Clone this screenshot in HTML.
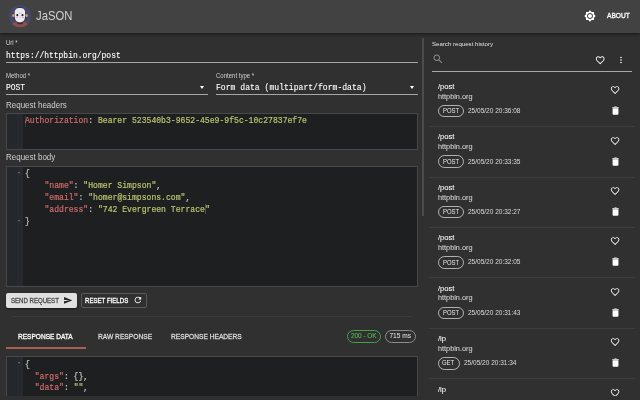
<!DOCTYPE html>
<html><head><meta charset="utf-8">
<style>
html,body{will-change:transform;margin:0;padding:0;width:640px;height:400px;overflow:hidden;background:#303030;font-family:"Liberation Sans",sans-serif;}
.a{position:absolute;}
.t{position:absolute;white-space:nowrap;line-height:1;transform-origin:0 0;}
.m{font-family:"Liberation Mono",monospace;}
#bar{left:0;top:0;width:640px;height:33px;background:#424242;box-shadow:0 1px 3px rgba(0,0,0,0.5);}
.ul{position:absolute;height:1px;background:#a8a8a8;}
.lab{color:#d0d0d0;font-size:6.7px;transform:scaleX(0.9);}
.inp{color:#fff;font-size:8.5px;transform:scaleX(0.937);-webkit-text-stroke:0.1px #fff;}
.sec{color:#d0d0d0;font-size:8.2px;transform:scaleX(0.975);}
.ed{position:absolute;background:#1d1f21;border:1px solid #484848;box-sizing:border-box;overflow:hidden;}
.gut{position:absolute;left:0;top:0;bottom:0;width:16px;background:linear-gradient(90deg,#24272b 0,#24272b 10.3px,#26292d 10.3px,#26292d 16.3px,#1d1f21 16.3px);}
.code{position:absolute;-webkit-text-stroke:0.2px #c5c8c6;transform-origin:0 0;transform:scaleX(0.9);font-family:"Liberation Mono",monospace;font-size:9px;color:#c5c8c6;white-space:pre;line-height:12px;}
.k{color:#d26a6a;-webkit-text-stroke:0.2px #d26a6a;}
.s{color:#bcc46e;-webkit-text-stroke:0.2px #bcc46e;}
.fold{position:absolute;width:0;height:0;border-left:1.7px solid transparent;border-right:1.7px solid transparent;border-top:2.2px solid #7a7a7a;}
.btxt{font-weight:normal;-webkit-text-stroke:0.3px currentColor;}
.chip{position:absolute;box-sizing:border-box;border:1px solid rgba(255,255,255,0.62);border-radius:7px;}
.hd{position:absolute;}
.tt{color:#fff;font-size:7.6px;-webkit-text-stroke:0.06px #fff;}
.host{color:#cfcfcf;font-size:7.3px;-webkit-text-stroke:0.1px #cfcfcf;}
.date{color:rgba(255,255,255,0.8);font-size:7px;transform:scaleX(0.93);}
.cht{color:#e8e8e8;font-size:7px;transform:scaleX(0.845);}
.div{position:absolute;left:429px;width:206px;height:1px;background:#3e3e3e;}
</style></head><body>

<!-- App bar -->
<div id="bar" class="a"></div>
<svg class="a" style="left:9px;top:5px" width="22.5" height="22.5" viewBox="0 0 22.5 22.5">
  <defs><clipPath id="cc"><circle cx="11.1" cy="11.2" r="11.1"/></clipPath></defs>
  <circle cx="11.1" cy="11.2" r="11.1" fill="#454869"/>
  <g clip-path="url(#cc)">
  <path d="M1.5 23 Q2.5 16.2 11 15.6 Q19.5 16.2 20.5 23Z" fill="#8e4f46"/>
  <ellipse cx="10.9" cy="10.4" rx="6.4" ry="8.3" fill="#2c2f4e"/>
  <rect x="8.6" y="16" width="4.8" height="3.2" fill="#262942"/>
  </g>
  <ellipse cx="4.3" cy="10.6" rx="1.2" ry="1.5" fill="#e39a68"/>
  <ellipse cx="17.6" cy="10.6" rx="1.2" ry="1.5" fill="#e39a68"/>
  <path d="M5.6 7.8 C5.6 4 7.8 2.9 10.9 2.9 C14 2.9 16.2 4 16.2 7.8 L16 12.6 C15.7 16 13.7 17.4 10.9 17.4 C8.1 17.4 6.1 16 5.8 12.6 Z" fill="#ebebf0"/>
  <ellipse cx="8.3" cy="10.2" rx="1" ry="1.1" fill="#1c1f33"/>
  <ellipse cx="13.5" cy="10.2" rx="1" ry="1.1" fill="#1c1f33"/>
  <rect x="6.6" y="12" width="2" height="1" fill="#e7a3a6"/>
  <rect x="13.2" y="12" width="2" height="1" fill="#e7a3a6"/>
  <circle cx="10.9" cy="8.2" r="0.8" fill="#e7a3a6"/>
  <rect x="10.4" y="10.5" width="1" height="3" fill="#d6d6e4"/>
</svg>
<div class="t" style="left:36px;top:9.6px;font-size:12.8px;color:#d2d2d2;transform:scaleX(0.88);">JaSON</div>
<svg class="a" style="left:584px;top:10px" width="12" height="12" viewBox="0 0 24 24"><path fill="#fff" d="M20 8.69V4h-4.69L12 .69 8.69 4H4v4.69L.69 12 4 15.31V20h4.69L12 23.31 15.31 20H20v-4.69L23.31 12 20 8.69zM12 18c-3.31 0-6-2.69-6-6s2.69-6 6-6 6 2.69 6 6-2.69 6-6 6zm0-10c-2.21 0-4 1.79-4 4s1.79 4 4 4 4-1.79 4-4-1.79-4-4-4z"/></svg>
<div class="t btxt" style="left:606.5px;top:12.2px;font-size:7.7px;color:#fff;transform:scaleX(0.865);">ABOUT</div>

<!-- Left form -->
<div class="t lab" style="left:6px;top:40.4px;">Url *</div>
<div class="t m inp" style="left:6px;top:52px;">https://httpbin.org/post</div>
<div class="ul" style="left:6px;top:62px;width:412px;"></div>

<div class="t lab" style="left:6px;top:72.8px;">Method *</div>
<div class="t m inp" style="left:6px;top:84.3px;">POST</div>
<div class="ul" style="left:6px;top:94px;width:201.5px;"></div>
<div class="a" style="left:199.7px;top:86.4px;width:0;height:0;border-left:2.4px solid transparent;border-right:2.4px solid transparent;border-top:3px solid #fff;"></div>

<div class="t lab" style="left:216px;top:72.8px;">Content type *</div>
<div class="t m inp" style="left:216px;top:84.3px;transform:scaleX(0.952);">Form data (multipart/form-data)</div>
<div class="ul" style="left:216px;top:94px;width:202px;"></div>
<div class="a" style="left:409.7px;top:86.4px;width:0;height:0;border-left:2.4px solid transparent;border-right:2.4px solid transparent;border-top:3px solid #fff;"></div>

<div class="t sec" style="left:6px;top:102px;">Request headers</div>
<div class="ed" style="left:6px;top:113px;width:412px;height:37px;">
  <div class="gut"></div>
  <div class="a" style="left:17.6px;top:1.5px;width:0.6px;height:11px;background:#3c3c3c;"></div><div class="code" style="left:18.2px;top:1px;"><span class="k">Authorization</span>: <span class="s">Bearer 523540b3-9652-45e9-9f5c-10c27837ef7e</span></div>
</div>

<div class="t sec" style="left:6px;top:154.4px;">Request body</div>
<div class="ed" style="left:6px;top:166px;width:412px;height:121px;">
  <div class="gut"></div>
  <div class="fold" style="left:11px;top:4.7px;"></div>
  <div class="fold" style="left:11px;top:52.7px;"></div>
  <div class="code" style="left:18.2px;top:1px;">{
    <span class="k">"name"</span>: <span class="s">"Homer Simpson"</span>,
    <span class="k">"email"</span>: <span class="s">"homer@simpsons.com"</span>,
    <span class="k">"address"</span>: <span class="s">"742 Evergreen Terrace<span style="display:inline-block;width:0;border-left:0.6px solid #555;margin-right:-0.6px;height:10px;vertical-align:-2px;"></span>"</span>
}</div>
</div>

<!-- buttons -->
<div class="a" style="left:6px;top:293px;width:70.5px;height:15px;background:#e0e0e0;border-radius:2px;box-shadow:0 1px 2px rgba(0,0,0,0.5);"></div>
<div class="t btxt" style="left:10.8px;top:296.7px;font-size:7px;color:#4a4a4a;transform:scaleX(0.866);">SEND REQUEST</div>
<svg class="a" style="left:63.9px;top:297px" width="8.2" height="6.8" viewBox="2 3 21 18" preserveAspectRatio="none"><path fill="#222" d="M2.01 21L23 12 2.01 3 2 10l15 2-15 2z"/></svg>
<div class="a" style="left:80.5px;top:293px;width:66px;height:15px;border:1px solid #5a5a5a;box-sizing:border-box;border-radius:2px;"></div>
<div class="t btxt" style="left:85px;top:296.6px;font-size:7px;color:#fff;transform:scaleX(0.87);">RESET FIELDS</div>
<svg class="a" style="left:132.7px;top:294.9px" width="9.8" height="9.8" viewBox="0 0 24 24"><path fill="#fff" d="M17.65 6.35C16.2 4.9 14.21 4 12 4c-4.42 0-7.99 3.58-7.99 8s3.57 8 7.99 8c3.73 0 6.84-2.55 7.73-6h-2.08c-.82 2.33-3.04 4-5.65 4-3.31 0-6-2.69-6-6s2.69-6 6-6c1.66 0 3.14.69 4.22 1.78L13 11h7V4l-2.35 2.35z"/></svg>

<!-- tabs -->
<div class="a" style="left:12px;top:316px;width:400px;height:1px;background:#3c3c3c;"></div>
<div class="t btxt" style="left:17.5px;top:332.9px;font-size:7px;color:#fff;transform:scaleX(0.935);">RESPONSE DATA</div>
<div class="t btxt" style="left:98.3px;top:332.9px;font-size:7px;color:rgba(255,255,255,0.7);transform:scaleX(0.95);">RAW RESPONSE</div>
<div class="t btxt" style="left:171.3px;top:332.9px;font-size:7px;color:rgba(255,255,255,0.7);transform:scaleX(0.947);">RESPONSE HEADERS</div>
<div class="a" style="left:6px;top:346.5px;width:80px;height:2.2px;background:#a6604f;"></div>

<div class="chip" style="left:346.5px;top:330px;width:34.5px;height:12.5px;border-color:#43a047;"></div>
<div class="t" style="left:351px;top:333.3px;font-size:6.4px;color:#52b656;-webkit-text-stroke:0.12px #52b656;">200 - OK</div>
<div class="chip" style="left:385px;top:330px;width:31px;height:12.5px;border-color:#8c8c8c;"></div>
<div class="t" style="left:389.4px;top:333.3px;font-size:6.6px;color:#e6e6e6;">715 ms</div>

<div class="ed" style="left:6px;top:356px;width:411.6px;height:50px;">
  <div class="gut"></div>
  <div class="fold" style="left:11px;top:4.7px;"></div>
  <div class="code" style="left:18.2px;top:3px;line-height:11.7px;">{
  <span class="k">"args"</span>: {},
  <span class="k">"data"</span>: <span class="s">""</span>,
</div>
</div>

<div class="a" style="left:0;top:395.5px;width:425px;height:5px;background:#2f2f2f;"></div>
<!-- scrollbar -->
<div class="a" style="left:421.6px;top:38px;width:2.4px;height:178px;background:#4c4c4c;"></div>

<!-- right panel -->
<div class="t" style="left:432px;top:40.6px;font-size:6.1px;color:#e0e0e0;">Search request history</div>
<svg class="a" style="left:431.6px;top:53.4px" width="12" height="12" viewBox="0 0 24 24"><path fill="#8e8e8e" d="M15.5 14h-.79l-.28-.27C15.41 12.59 16 11.11 16 9.5 16 5.91 13.09 3 9.5 3S3 5.91 3 9.5 5.91 16 9.5 16c1.61 0 3.09-.59 4.23-1.57l.27.28v.79l5 4.99L20.49 19l-4.99-5zm-6 0C7.01 14 5 11.99 5 9.5S7.01 5 9.5 5 14 7.01 14 9.5 11.99 14 9.5 14z"/></svg>
<svg class="a" style="left:595.2px;top:54.8px" width="10.4" height="10.4" viewBox="0 0 24 24"><path fill="#fff" d="M16.5 3c-1.74 0-3.41.81-4.5 2.09C10.91 3.81 9.24 3 7.5 3 4.42 3 2 5.42 2 8.5c0 3.78 3.4 6.86 8.55 11.54L12 21.35l1.45-1.32C18.6 15.36 22 12.28 22 8.5 22 5.42 19.58 3 16.5 3zm-4.4 15.55l-.1.1-.1-.1C7.14 14.24 4 11.39 4 8.5 4 6.5 5.5 5 7.5 5c1.54 0 3.04.99 3.57 2.36h1.87C13.46 5.99 14.96 5 16.5 5c2 0 3.5 1.5 3.5 3.5 0 2.89-3.14 5.74-7.9 10.05z"/></svg>
<svg class="a" style="left:616px;top:55px" width="10" height="10" viewBox="0 0 24 24"><path fill="#fff" d="M12 8c1.1 0 2-.9 2-2s-.9-2-2-2-2 .9-2 2 .9 2 2 2zm0 2c-1.1 0-2 .9-2 2s.9 2 2 2 2-.9 2-2-.9-2-2-2zm0 6c-1.1 0-2 .9-2 2s.9 2 2 2 2-.9 2-2-.9-2-2-2z"/></svg>
<div class="ul" style="left:432px;top:71px;width:200px;"></div>

<div class="a" style="left:0;top:0;width:640px;height:396px;overflow:hidden;"><div class="t tt" style="left:438px;top:82.98px;">/post</div>
<div class="t host" style="left:438px;top:92.68px;">httpbin.org</div>
<div class="chip" style="left:438px;top:104.88px;width:26px;height:12.6px;"></div>
<div class="t cht" style="left:442.5px;top:107.28px;">POST</div>
<div class="t date" style="left:468px;top:107.18px;">25/05/20 20:36:08</div>
<svg class="a" style="left:609.9px;top:85.08px" width="10.2" height="10.2" viewBox="0 0 24 24"><path fill="#fff" d="M16.5 3c-1.74 0-3.41.81-4.5 2.09C10.91 3.81 9.24 3 7.5 3 4.42 3 2 5.42 2 8.5c0 3.78 3.4 6.86 8.55 11.54L12 21.35l1.45-1.32C18.6 15.36 22 12.28 22 8.5 22 5.42 19.58 3 16.5 3zm-4.4 15.55l-.1.1-.1-.1C7.14 14.24 4 11.39 4 8.5 4 6.5 5.5 5 7.5 5c1.54 0 3.04.99 3.57 2.36h1.87C13.46 5.99 14.96 5 16.5 5c2 0 3.5 1.5 3.5 3.5 0 2.89-3.14 5.74-7.9 10.05z"/></svg>
<svg class="a" style="left:609.5px;top:105.18px" width="11" height="11" viewBox="0 0 24 24"><path fill="#fff" d="M5.6 7.2h12.8V19c0 1.2-.9 2-2 2H7.6c-1.1 0-2-.8-2-2zM5 4.2h14V6.2H5zM9.5 3h5v1.3h-5z"/></svg>
<div class="div" style="top:126.08px;"></div>
<div class="t tt" style="left:438px;top:133.4px;">/post</div>
<div class="t host" style="left:438px;top:143.1px;">httpbin.org</div>
<div class="chip" style="left:438px;top:155.3px;width:26px;height:12.6px;"></div>
<div class="t cht" style="left:442.5px;top:157.7px;">POST</div>
<div class="t date" style="left:468px;top:157.6px;">25/05/20 20:33:35</div>
<svg class="a" style="left:609.9px;top:135.5px" width="10.2" height="10.2" viewBox="0 0 24 24"><path fill="#fff" d="M16.5 3c-1.74 0-3.41.81-4.5 2.09C10.91 3.81 9.24 3 7.5 3 4.42 3 2 5.42 2 8.5c0 3.78 3.4 6.86 8.55 11.54L12 21.35l1.45-1.32C18.6 15.36 22 12.28 22 8.5 22 5.42 19.58 3 16.5 3zm-4.4 15.55l-.1.1-.1-.1C7.14 14.24 4 11.39 4 8.5 4 6.5 5.5 5 7.5 5c1.54 0 3.04.99 3.57 2.36h1.87C13.46 5.99 14.96 5 16.5 5c2 0 3.5 1.5 3.5 3.5 0 2.89-3.14 5.74-7.9 10.05z"/></svg>
<svg class="a" style="left:609.5px;top:155.6px" width="11" height="11" viewBox="0 0 24 24"><path fill="#fff" d="M5.6 7.2h12.8V19c0 1.2-.9 2-2 2H7.6c-1.1 0-2-.8-2-2zM5 4.2h14V6.2H5zM9.5 3h5v1.3h-5z"/></svg>
<div class="div" style="top:176.5px;"></div>
<div class="t tt" style="left:438px;top:183.82px;">/post</div>
<div class="t host" style="left:438px;top:193.52px;">httpbin.org</div>
<div class="chip" style="left:438px;top:205.72px;width:26px;height:12.6px;"></div>
<div class="t cht" style="left:442.5px;top:208.12px;">POST</div>
<div class="t date" style="left:468px;top:208.02px;">25/05/20 20:32:27</div>
<svg class="a" style="left:609.9px;top:185.92px" width="10.2" height="10.2" viewBox="0 0 24 24"><path fill="#fff" d="M16.5 3c-1.74 0-3.41.81-4.5 2.09C10.91 3.81 9.24 3 7.5 3 4.42 3 2 5.42 2 8.5c0 3.78 3.4 6.86 8.55 11.54L12 21.35l1.45-1.32C18.6 15.36 22 12.28 22 8.5 22 5.42 19.58 3 16.5 3zm-4.4 15.55l-.1.1-.1-.1C7.14 14.24 4 11.39 4 8.5 4 6.5 5.5 5 7.5 5c1.54 0 3.04.99 3.57 2.36h1.87C13.46 5.99 14.96 5 16.5 5c2 0 3.5 1.5 3.5 3.5 0 2.89-3.14 5.74-7.9 10.05z"/></svg>
<svg class="a" style="left:609.5px;top:206.02px" width="11" height="11" viewBox="0 0 24 24"><path fill="#fff" d="M5.6 7.2h12.8V19c0 1.2-.9 2-2 2H7.6c-1.1 0-2-.8-2-2zM5 4.2h14V6.2H5zM9.5 3h5v1.3h-5z"/></svg>
<div class="div" style="top:226.92px;"></div>
<div class="t tt" style="left:438px;top:234.24px;">/post</div>
<div class="t host" style="left:438px;top:243.94px;">httpbin.org</div>
<div class="chip" style="left:438px;top:256.14px;width:26px;height:12.6px;"></div>
<div class="t cht" style="left:442.5px;top:258.54px;">POST</div>
<div class="t date" style="left:468px;top:258.44px;">25/05/20 20:32:05</div>
<svg class="a" style="left:609.9px;top:236.34px" width="10.2" height="10.2" viewBox="0 0 24 24"><path fill="#fff" d="M16.5 3c-1.74 0-3.41.81-4.5 2.09C10.91 3.81 9.24 3 7.5 3 4.42 3 2 5.42 2 8.5c0 3.78 3.4 6.86 8.55 11.54L12 21.35l1.45-1.32C18.6 15.36 22 12.28 22 8.5 22 5.42 19.58 3 16.5 3zm-4.4 15.55l-.1.1-.1-.1C7.14 14.24 4 11.39 4 8.5 4 6.5 5.5 5 7.5 5c1.54 0 3.04.99 3.57 2.36h1.87C13.46 5.99 14.96 5 16.5 5c2 0 3.5 1.5 3.5 3.5 0 2.89-3.14 5.74-7.9 10.05z"/></svg>
<svg class="a" style="left:609.5px;top:256.44px" width="11" height="11" viewBox="0 0 24 24"><path fill="#fff" d="M5.6 7.2h12.8V19c0 1.2-.9 2-2 2H7.6c-1.1 0-2-.8-2-2zM5 4.2h14V6.2H5zM9.5 3h5v1.3h-5z"/></svg>
<div class="div" style="top:277.34px;"></div>
<div class="t tt" style="left:438px;top:284.66px;">/post</div>
<div class="t host" style="left:438px;top:294.36px;">httpbin.org</div>
<div class="chip" style="left:438px;top:306.56px;width:26px;height:12.6px;"></div>
<div class="t cht" style="left:442.5px;top:308.96px;">POST</div>
<div class="t date" style="left:468px;top:308.86px;">25/05/20 20:31:43</div>
<svg class="a" style="left:609.9px;top:286.76px" width="10.2" height="10.2" viewBox="0 0 24 24"><path fill="#fff" d="M16.5 3c-1.74 0-3.41.81-4.5 2.09C10.91 3.81 9.24 3 7.5 3 4.42 3 2 5.42 2 8.5c0 3.78 3.4 6.86 8.55 11.54L12 21.35l1.45-1.32C18.6 15.36 22 12.28 22 8.5 22 5.42 19.58 3 16.5 3zm-4.4 15.55l-.1.1-.1-.1C7.14 14.24 4 11.39 4 8.5 4 6.5 5.5 5 7.5 5c1.54 0 3.04.99 3.57 2.36h1.87C13.46 5.99 14.96 5 16.5 5c2 0 3.5 1.5 3.5 3.5 0 2.89-3.14 5.74-7.9 10.05z"/></svg>
<svg class="a" style="left:609.5px;top:306.86px" width="11" height="11" viewBox="0 0 24 24"><path fill="#fff" d="M5.6 7.2h12.8V19c0 1.2-.9 2-2 2H7.6c-1.1 0-2-.8-2-2zM5 4.2h14V6.2H5zM9.5 3h5v1.3h-5z"/></svg>
<div class="div" style="top:327.76px;"></div>
<div class="t tt" style="left:438px;top:335.08px;">/ip</div>
<div class="t host" style="left:438px;top:344.78px;">httpbin.org</div>
<div class="chip" style="left:438px;top:356.98px;width:21.6px;height:12.6px;"></div>
<div class="t cht" style="left:442.3px;top:359.38px;">GET</div>
<div class="t date" style="left:463.6px;top:359.28px;">25/05/20 20:31:34</div>
<svg class="a" style="left:609.9px;top:337.18px" width="10.2" height="10.2" viewBox="0 0 24 24"><path fill="#fff" d="M16.5 3c-1.74 0-3.41.81-4.5 2.09C10.91 3.81 9.24 3 7.5 3 4.42 3 2 5.42 2 8.5c0 3.78 3.4 6.86 8.55 11.54L12 21.35l1.45-1.32C18.6 15.36 22 12.28 22 8.5 22 5.42 19.58 3 16.5 3zm-4.4 15.55l-.1.1-.1-.1C7.14 14.24 4 11.39 4 8.5 4 6.5 5.5 5 7.5 5c1.54 0 3.04.99 3.57 2.36h1.87C13.46 5.99 14.96 5 16.5 5c2 0 3.5 1.5 3.5 3.5 0 2.89-3.14 5.74-7.9 10.05z"/></svg>
<svg class="a" style="left:609.5px;top:357.28px" width="11" height="11" viewBox="0 0 24 24"><path fill="#fff" d="M5.6 7.2h12.8V19c0 1.2-.9 2-2 2H7.6c-1.1 0-2-.8-2-2zM5 4.2h14V6.2H5zM9.5 3h5v1.3h-5z"/></svg>
<div class="div" style="top:378.18px;"></div>
<div class="t tt" style="left:438px;top:385.5px;">/ip</div>
<div class="t host" style="left:438px;top:395.2px;">httpbin.org</div>
<div class="chip" style="left:438px;top:407.4px;width:21.6px;height:12.6px;"></div>
<div class="t cht" style="left:442.3px;top:409.8px;">GET</div>
<div class="t date" style="left:463.6px;top:409.7px;">25/05/20 20:31:20</div>
<svg class="a" style="left:609.9px;top:387.6px" width="10.2" height="10.2" viewBox="0 0 24 24"><path fill="#fff" d="M16.5 3c-1.74 0-3.41.81-4.5 2.09C10.91 3.81 9.24 3 7.5 3 4.42 3 2 5.42 2 8.5c0 3.78 3.4 6.86 8.55 11.54L12 21.35l1.45-1.32C18.6 15.36 22 12.28 22 8.5 22 5.42 19.58 3 16.5 3zm-4.4 15.55l-.1.1-.1-.1C7.14 14.24 4 11.39 4 8.5 4 6.5 5.5 5 7.5 5c1.54 0 3.04.99 3.57 2.36h1.87C13.46 5.99 14.96 5 16.5 5c2 0 3.5 1.5 3.5 3.5 0 2.89-3.14 5.74-7.9 10.05z"/></svg>
<svg class="a" style="left:609.5px;top:407.7px" width="11" height="11" viewBox="0 0 24 24"><path fill="#fff" d="M5.6 7.2h12.8V19c0 1.2-.9 2-2 2H7.6c-1.1 0-2-.8-2-2zM5 4.2h14V6.2H5zM9.5 3h5v1.3h-5z"/></svg>
<div class="div" style="top:428.6px;"></div></div>

</body></html>
